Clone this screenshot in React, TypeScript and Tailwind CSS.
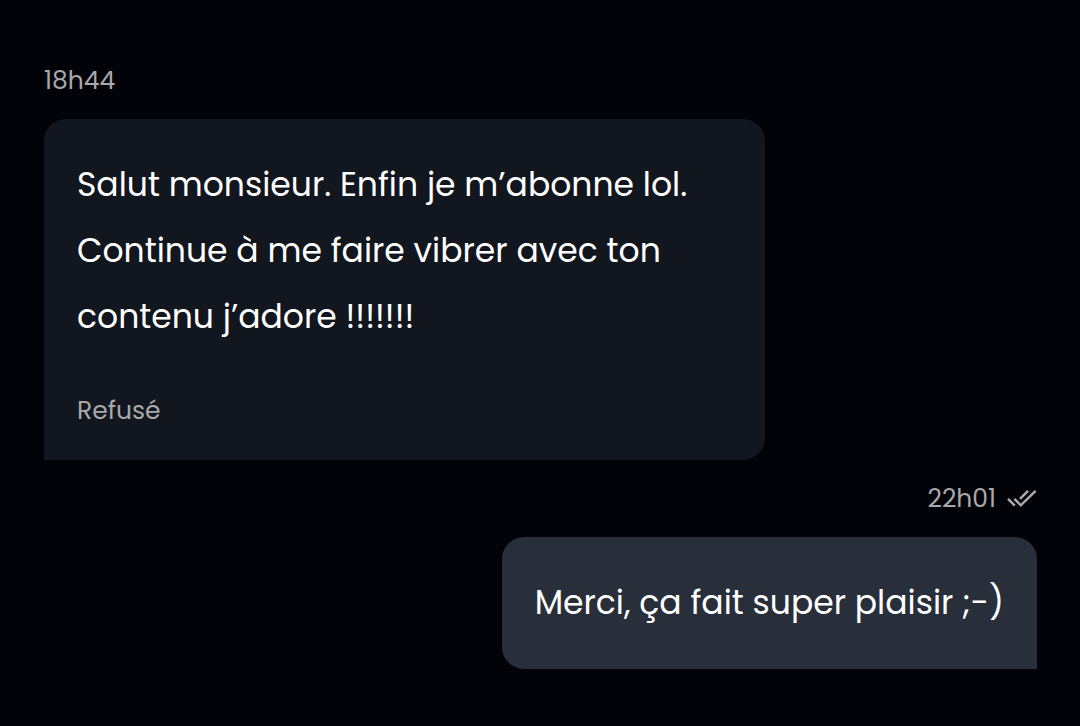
function DoubleCheck() {
  return (
    <svg width="30" height="18" viewBox="0 0 30 18" fill="none" stroke="currentColor" strokeWidth="2.5" aria-hidden="true">
      <path d="M1 8.9l6.8 6.8M7.4 8.9l6.4 6.4L28.6 .9M13 8.9l8-8" />
    </svg>
  );
}

export default function App() {
  return (
    <main className="min-h-screen bg-[#020308] pt-[65px] pr-[43px] pb-14 pl-11 font-['Poppins',Lato,sans-serif] text-white">
      <section className="flex flex-col items-start">
        <time className="text-[25px] leading-8 text-[#a9a9ab]">18h44</time>
        <div className="mt-[22px] w-full max-w-[721px] rounded-[22px] rounded-bl-none bg-[#12161e] p-[33px]">
          <p className="text-[33px] leading-[66px]">Salut monsieur. Enfin je m’abonne lol. Continue à me faire vibrer avec ton contenu j’adore !!!!!!!</p>
          <p className="mt-[45px] text-[25px] leading-8 text-[#a9a9ab]">Refusé</p>
        </div>
      </section>
      <section className="mt-[23px] flex flex-col items-end">
        <div className="flex items-center gap-[11px] text-[#a9a9ab]">
          <time className="text-[25px] leading-8">22h01</time>
          <DoubleCheck />
        </div>
        <div className="mt-[22px] rounded-[22px] rounded-br-none bg-[#282e3a] p-[33px]">
          <p className="text-[33px] leading-[66px]">Merci, ça fait super plaisir ;-)</p>
        </div>
      </section>
    </main>
  );
}
